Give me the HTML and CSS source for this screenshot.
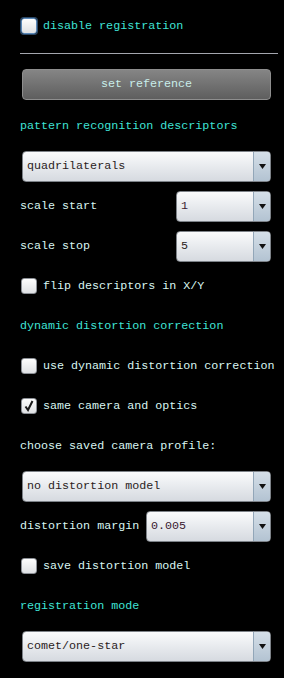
FILE: index.html
```html
<!DOCTYPE html>
<html lang="en">
<head>
    <meta charset="UTF-8">
    <meta name="viewport" content="width=device-width, initial-scale=1.0">
    <title>Registration</title>
    <link rel="stylesheet" href="styles.css">
</head>
<body>

<div class="panel">
    <!-- top: on/off and reference -->
    <div class="row top">
        <span class="box focus"></span>
        <span class="head">disable registration</span>
    </div>
    <div class="rule"></div>
    <div class="button">set reference</div>

    <div class="rows">
        <div class="row"><span class="head">pattern recognition descriptors</span></div>
        <div class="row">
            <div class="select wide"><span class="value">quadrilaterals</span><span class="arrow"><svg width="7" height="5" viewBox="0 0 7 5"><path d="M0 0h7L3.5 5z" fill="#111"/></svg></span></div>
        </div>
        <div class="row">
            <span class="label">scale start</span>
            <div class="select small"><span class="value num">1</span><span class="arrow"><svg width="7" height="5" viewBox="0 0 7 5"><path d="M0 0h7L3.5 5z" fill="#111"/></svg></span></div>
        </div>
        <div class="row">
            <span class="label">scale stop</span>
            <div class="select small"><span class="value">5</span><span class="arrow"><svg width="7" height="5" viewBox="0 0 7 5"><path d="M0 0h7L3.5 5z" fill="#111"/></svg></span></div>
        </div>
        <div class="row">
            <span class="box"></span>
            <span class="label">flip descriptors in X/Y</span>
        </div>

        <div class="row"><span class="head">dynamic distortion correction</span></div>
        <div class="row">
            <span class="box"></span>
            <span class="label">use dynamic distortion correction</span>
        </div>
        <div class="row">
            <span class="box checked"><svg width="12" height="12" viewBox="0 0 12 12"><path d="M2.5 6.5l2.5 3.5L9.5 1" fill="none" stroke="#1a1a1a" stroke-width="2"/></svg></span>
            <span class="label">same camera and optics</span>
        </div>
        <div class="row"><span class="label">choose saved camera profile:</span></div>
        <div class="row">
            <div class="select wide"><span class="value">no distortion model</span><span class="arrow"><svg width="7" height="5" viewBox="0 0 7 5"><path d="M0 0h7L3.5 5z" fill="#111"/></svg></span></div>
        </div>
        <div class="row">
            <span class="label">distortion margin</span>
            <div class="select mid"><span class="value num">0.005</span><span class="arrow"><svg width="7" height="5" viewBox="0 0 7 5"><path d="M0 0h7L3.5 5z" fill="#111"/></svg></span></div>
        </div>
        <div class="row">
            <span class="box"></span>
            <span class="label">save distortion model</span>
        </div>

        <div class="row"><span class="head">registration mode</span></div>
        <div class="row">
            <div class="select wide"><span class="value">comet/one-star</span><span class="arrow"><svg width="7" height="5" viewBox="0 0 7 5"><path d="M0 0h7L3.5 5z" fill="#111"/></svg></span></div>
        </div>
    </div>
</div>

</body>
</html>
```

FILE: styles.css
```css
body {
    margin: 0;
    padding: 0;
    background: #000;
    font-family: "Liberation Mono", "Courier New", monospace;
    font-size: 11.7px;
    height: 678px;
    overflow: hidden;
}

.panel {
    padding-left: 20px;
    padding-top: 1px;
    width: 251px;
}

.row {
    display: flex;
    align-items: center;
    height: 40px;
    white-space: nowrap;
}

.top {
    height: 48px;
    margin-top: 1px;
}

.head {
    color: #3fe3d6;
}

.label {
    color: #d9f6f2;
}

/* checkboxes */
.box {
    width: 14px;
    height: 14px;
    margin-left: 1px;
    margin-right: 6px;
    border: 1px solid #8c9096;
    border-radius: 3px;
    background: linear-gradient(#fdfdfd, #dfe1e4);
    display: flex;
    align-items: center;
    justify-content: center;
    flex: none;
}

.box.focus {
    border-color: #5a88b8;
    box-shadow: 0 0 0 1px #2c4a6a;
}

.rule {
    width: 258px;
    height: 1px;
    background: #a4a6ae;
    margin-top: 3px;
}

.button {
    margin: 15px 0 0 2px;
    width: 247px;
    height: 29px;
    border: 1px solid #8e8e8e;
    border-radius: 4px;
    background: linear-gradient(#858585, #5e5e5e);
    color: #c9eeea;
    text-align: center;
    line-height: 29px;
}

.rows {
    margin-top: 6px;
}

/* drop-down boxes */
.select {
    display: flex;
    height: 29px;
    margin-left: auto;
    border: 1px solid #7d8288;
    border-radius: 4px;
    background: linear-gradient(#fafbfc, #e4e7eb 60%, #d6dae0);
    overflow: hidden;
}

.select.wide {
    width: 247px;
    margin-left: 2px;
}

.select.small {
    width: 93px;
}

.select.mid {
    width: 123px;
}

.value {
    flex: 1;
    padding-left: 4px;
    line-height: 29px;
    color: #2a1c1c;
}

.value.num {
    color: #3a1830;
}

.arrow {
    width: 16px;
    border-left: 1px solid #92a6b8;
    background: linear-gradient(#d5dfe8, #b3c3d2);
    display: flex;
    align-items: center;
    justify-content: center;
}
```
